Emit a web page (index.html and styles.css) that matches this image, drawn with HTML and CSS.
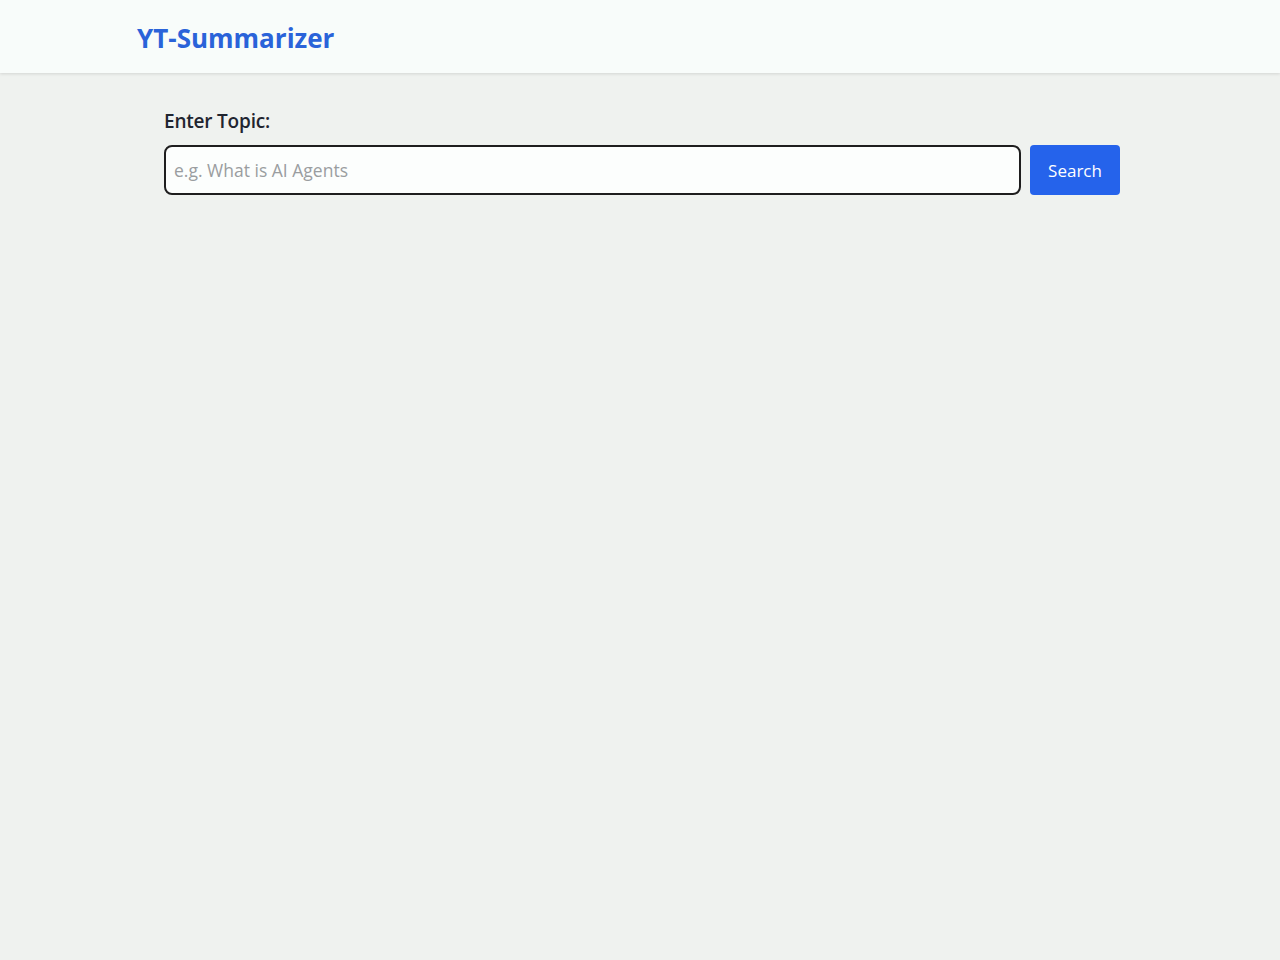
FILE: index.html
```html
<!DOCTYPE html>
<html lang="en">
<head>
<meta charset="utf-8">
<title>YT-Summarizer</title>
<link rel="stylesheet" href="styles.css">
</head>
<body>
<header class="topbar">
  <div class="topbar-inner">
    <span class="logo">YT-Summarizer</span>
  </div>
</header>
<main class="main">
  <label class="label" for="topic">Enter Topic:</label>
  <div class="search-row">
    <input id="topic" class="input" type="text" placeholder="e.g. What is AI Agents">
    <button class="btn" type="button">Search</button>
  </div>
</main>
</body>
</html>
```
FILE: styles.css
```css
* { box-sizing: border-box; }
html, body { margin: 0; padding: 0; }
body {
  background: #eff2ef;
  font-family: "Open Sans", "Noto Sans", "Liberation Sans", sans-serif;
  color: #1f2328;
  min-height: 960px;
}
.topbar {
  background: #f8fcfa;
  height: 73px;
  box-shadow: 0 1px 3px rgba(0,0,0,0.12);
}
.topbar-inner {
  width: 1006px;
  margin: 0 auto;
  height: 73px;
  display: flex;
  align-items: center;
}
.logo {
  font-size: 26px;
  font-weight: 700;
  color: #2a63d9;
  letter-spacing: 0;
  padding-top: 2px;
}
.main {
  width: 956px;
  margin-left: calc(50% - 476px);
  padding-top: 35px;
}
.label {
  display: block;
  font-size: 19px;
  font-weight: 600;
  color: #1f2530;
  letter-spacing: -0.2px;
  margin-bottom: 11px;
}
.search-row {
  display: flex;
  gap: 9px;
}
.input {
  flex: 1;
  height: 50px;
  border: 2px solid #1e1e1e;
  border-radius: 8px;
  background: #fcfefd;
  padding: 0 8px;
  font-family: inherit;
  font-size: 17.5px;
  color: #222;
  outline: none;
}
.input::placeholder { color: #9a9da0; }
.btn {
  width: 90px;
  height: 50px;
  border: none;
  border-radius: 4px;
  background: #2563eb;
  color: #fff;
  font-family: inherit;
  font-size: 17px;
  padding-top: 2px;
  cursor: pointer;
}
```
